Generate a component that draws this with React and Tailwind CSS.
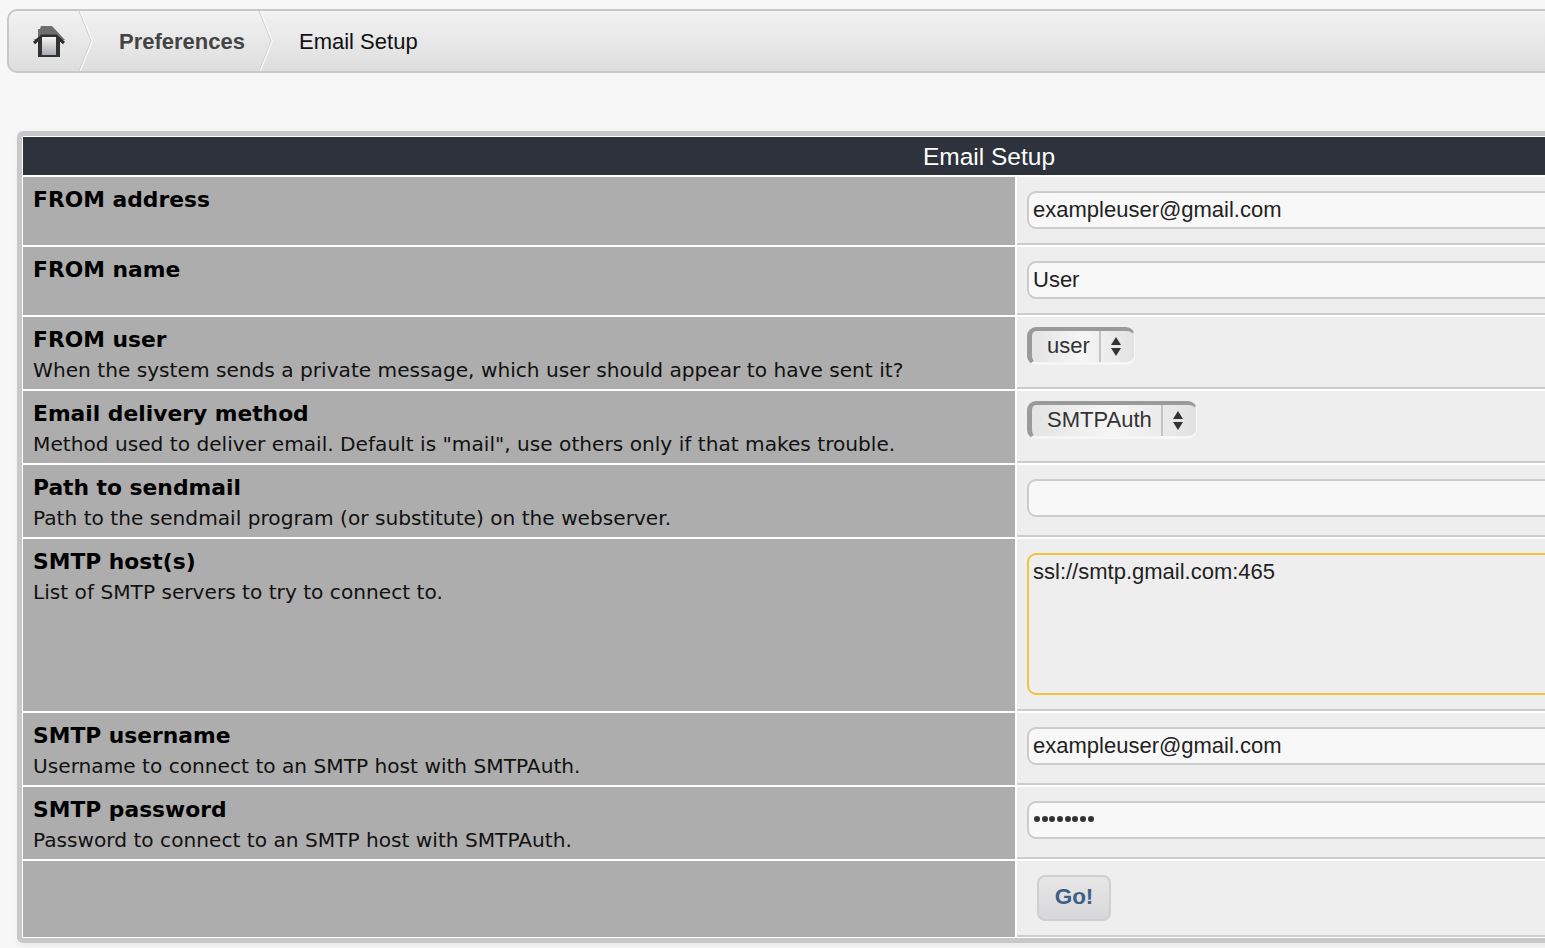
import React from 'react'

const inputCls = "block h-[38px] w-full rounded-[9px] border-2 border-[#cccccc] bg-[#f8f8f8] pl-1 font-['Liberation_Sans'] text-[22px] leading-[34px] text-[#222]"

function HomeIcon() {
  return (
    <svg width="32" height="32" viewBox="0 0 32 32">
      <defs>
        <linearGradient id="door" x1="0" y1="0" x2="0" y2="1">
          <stop offset="0" stopColor="#f4f4f4" />
          <stop offset="1" stopColor="#a9aeb4" />
        </linearGradient>
      </defs>
      <path d="M5 12 L5 3 L7 3 L8 0 L19 0 L32 14 L0 14 Z" fill="#6e6e6e" />
      <path d="M1 17 L9 10 L23 10 L31 17" fill="none" stroke="#2e2e2e" strokeWidth="3" />
      <rect x="5" y="12" width="22" height="19" fill="#333" />
      <rect x="9" y="11" width="14" height="18" fill="url(#door)" />
    </svg>
  )
}

function Chevron() {
  return (
    <svg width="16" height="60" viewBox="0 0 16 60" className="shrink-0">
      <path d="M1 0 L13 30 L1 60" fill="none" stroke="#f7f7f7" strokeWidth="2" />
      <path d="M0 0 L12 30 L0 60" fill="none" stroke="#cfcfcf" strokeWidth="1" />
    </svg>
  )
}

function FakeSelect({ label, width }) {
  return (
    <div className={"flex h-[38px] rounded-[9px] border-t-[4px] border-l-[5px] border-r border-b-[3px] border-t-[#9a9a9a] border-l-[#9a9a9a] border-r-[#f6f6f6] border-b-[#f6f6f6] bg-linear-to-r from-[#e4e4e4] via-[#f6f6f6] to-[#e2e2e2] " + width}>
      <span className="flex-1 pl-[15px] font-['Liberation_Sans'] text-[22px] leading-[29px] text-[#333]">{label}</span>
      <span className="flex w-[35px] flex-col items-center justify-center gap-[3px] border-l-2 border-[#c4c4c4] pr-[4px]">
        <span className="h-0 w-0 border-x-[5px] border-b-[8px] border-x-transparent border-b-[#333]" />
        <span className="h-0 w-0 border-x-[5px] border-t-[8px] border-x-transparent border-t-[#333]" />
      </span>
    </div>
  )
}

function Row({ title, desc, height, children }) {
  return (
    <div className="flex gap-[2px]" style={{ height }}>
      <div className="w-[992px] shrink-0 bg-[#adadad] pl-[10px] pt-[9px] font-['DejaVu_Sans'] text-black">
        <div className="text-[21.8px] font-bold leading-[28px]">{title}</div>
        {desc && <div className="mt-[2px] text-[20.15px] leading-[28px] text-[#111]">{desc}</div>}
      </div>
      <div className="flex-1 border-b-2 border-[#cccccc] bg-[#eeeeee] pl-[10px] pt-[14px]">{children}</div>
    </div>
  )
}

export default function App() {
  return (
    <div className="h-[948px] w-[1545px] overflow-hidden bg-[#f7f7f7] pl-[7px] pt-[9px]">
      <nav className="flex h-[64px] w-[1560px] items-center rounded-[10px] border-2 border-[#c8c8c8] bg-linear-to-b from-[#f2f2f2] to-[#dedede]">
        <div className="flex w-[70px] shrink-0 justify-center pl-[10px] pt-[2px]"><HomeIcon /></div>
        <Chevron />
        <span className="w-[165px] shrink-0 pl-[24px] font-['Liberation_Sans'] text-[22px] font-bold whitespace-nowrap text-[#444]">Preferences</span>
        <span className="-ml-[1px]"><Chevron /></span>
        <span className="pl-[24px] font-['Liberation_Sans'] text-[22px] text-[#111]">Email Setup</span>
      </nav>

      <div className="ml-[10px] mt-[58px] w-[1560px] rounded-[6px] border-y-[5px] border-l-[5px] border-[#c8c8c8] bg-white pl-px py-px shadow-[0_3px_6px_rgba(0,0,0,0.06)]">
        <div className="flex flex-col gap-[2px]">
          <div className="flex h-[38px] bg-[#2d323c]">
            <div className="w-[1932px] shrink-0 text-center font-['Liberation_Sans'] text-[24.5px] leading-[40px] text-white">Email Setup</div>
          </div>
          <Row title="FROM address" height={68}>
            <div className={inputCls}>exampleuser@gmail.com</div>
          </Row>
          <Row title="FROM name" height={68}>
            <div className={inputCls}>User</div>
          </Row>
          <Row title="FROM user" desc="When the system sends a private message, which user should appear to have sent it?" height={72}>
            <div className="-mt-[4px]"><FakeSelect label="user" width="w-[108px]" /></div>
          </Row>
          <Row title="Email delivery method" desc={'Method used to deliver email. Default is "mail", use others only if that makes trouble.'} height={72}>
            <div className="-mt-[4px]"><FakeSelect label="SMTPAuth" width="w-[170px]" /></div>
          </Row>
          <Row title="Path to sendmail" desc="Path to the sendmail program (or substitute) on the webserver." height={72}>
            <div className={inputCls} />
          </Row>
          <Row title="SMTP host(s)" desc="List of SMTP servers to try to connect to." height={172}>
            <div className="h-[142px] rounded-[9px] border-2 border-[#f0c33c] bg-[#eeeeee] pl-1 pt-[2px] font-['Liberation_Sans'] text-[22px] leading-[30px] text-[#222]">ssl://smtp.gmail.com:465</div>
          </Row>
          <Row title="SMTP username" desc="Username to connect to an SMTP host with SMTPAuth." height={72}>
            <div className={inputCls}>exampleuser@gmail.com</div>
          </Row>
          <Row title="SMTP password" desc="Password to connect to an SMTP host with SMTPAuth." height={72}>
            <div className="flex h-[38px] w-full items-center gap-[1.7px] rounded-[9px] border-2 border-[#cccccc] bg-[#f8f8f8] pb-[2px] pl-[5px]">
              {[0, 1, 2, 3, 4, 5, 6, 7].map(i => (
                <span key={i} className="h-[6px] w-[6px] rounded-full bg-[#333]" />
              ))}
            </div>
          </Row>
          <Row title="" height={76}>
            <button className="ml-[10px] h-[46px] w-[74px] rounded-[8px] border-2 border-[#cfcfcf] bg-linear-to-b from-[#e6e6e6] to-[#d8d8dc] pb-[2px] font-['Liberation_Sans'] text-[22.5px] font-bold text-[#3d5f85]">Go!</button>
          </Row>
        </div>
      </div>
    </div>
  )
}
